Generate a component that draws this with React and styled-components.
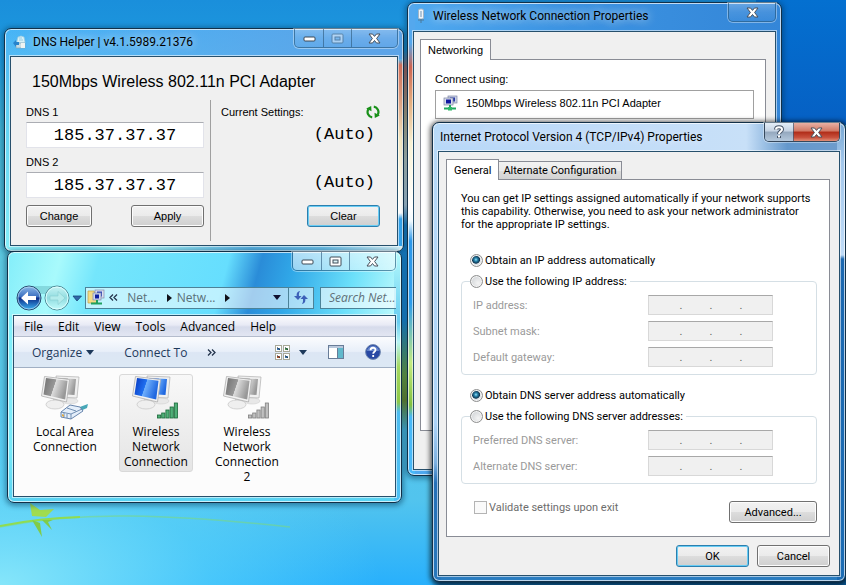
import React from "react";
import styled, { createGlobalStyle, css } from "styled-components";

const segoe = `"Open Sans", "Noto Sans", sans-serif`;
const caption = `Roboto, "Open Sans", sans-serif`;
const dialog = `Roboto, "DejaVu Sans Condensed", sans-serif`;
const msSans = `"Liberation Sans", Arial, sans-serif`;
const mono = `"Liberation Mono", "Courier New", monospace`;

const GlobalStyle = createGlobalStyle`
  *, *::before, *::after { box-sizing: border-box; }
  body { margin: 0; overflow: hidden; }
  button, input { font: inherit; color: inherit; }
`;

/* ---------- desktop ---------- */

const Desktop = styled.main`
  position: relative;
  min-height: 100vh;
  overflow: hidden;
  font: 11px/13px ${dialog};
  color: #000;
  background:
    linear-gradient(90deg, transparent 51%, #1373b6 52%, #0a5c9c 100%) 0 100% / 100% 110px no-repeat,
    linear-gradient(180deg, #c8543c00 50px, #d4705a 70px, #e8c890 120px, #fbf6dc 160px, #eefaff 205px, #1e90e0 225px, #1e90e0 320px, #7db03a 375px, #7a9420 400px, #2b9ae000 430px) 395px 0 / 22px 100% no-repeat,
    radial-gradient(ellipse 380px 190px at 0% 100%, #86e6fa 0%, #5dd6fa99 55%, transparent 100%),
    linear-gradient(180deg, #0470d0 0%, #0660c4 100%) 100% 0 / 90px 125px no-repeat,
    linear-gradient(180deg, #1a8fdb 0, #1e9ade 60px, #43b8d8 130px, #5cc8e0 260px, #52c4ee 500px, #28b0fc 100%);
`;

const Branch = styled.svg`
  position: absolute;
  left: 0;
  bottom: 36px;
  width: 300px;
  height: 48px;
`;

const places = {
  helper: css`
    left: 4px;
    right: calc(50% + 19px);
    top: 28px;
    background:
      linear-gradient(180deg, transparent 30px, #d4705a 36px, #e0a080 70px, #f4e8c0 110px, #fffdf0 160px, #fdfefe 184px, #35a4ec 190px) 100% 0 / 8px 217px no-repeat,
      linear-gradient(90deg, #8aeef8, #7ee6f4 20%, #a6f6f8 34%, #58b0e0 62%, #6cc0e8 80%, #d8f4fa) 0 100% / 100% 6px no-repeat,
      linear-gradient(90deg, transparent, #5ca4e8 90%) 0 0 / 100% 30px no-repeat,
      linear-gradient(180deg, #46b4f6, #54bcf4 30px, #5fd0f2 80px, #86eef8);
  `,
  explorer: css`
    left: 7px;
    right: calc(50% + 21px);
    top: 251px;
    background:
      linear-gradient(180deg, #b4fafc, #68ccf0 70px, #b8f4f4 90px, #a4d860 115px, #8cc848 150px, #4cbcf0 160px, #4cc0f4) 100% 0 / 7px 100% no-repeat,
      linear-gradient(105deg, #84eefa 0, #a8fafc 52px, #74e6fc 90px, #66defe 215px, #2a8cd8 247px, #30a8e8 280px, #6ce0fa 340px, #c4fcfc 100%) 0 0 / 100% 64px no-repeat,
      linear-gradient(180deg, #8cf4fc, #74e8f8 200px, #58d2f2);
  `,
  network: css`
    left: calc(50% - 16px);
    right: 64px;
    top: 2px;
    background:
      linear-gradient(180deg, #54a8ee 40px, #cc6450 64px, #e4b080 100px, #f8f2d4 140px, #ffffff 205px, #f0faff 218px, #2c98ea 238px, #2c9cec 300px, #c4ec80 360px, #80c040 402px, #48b8f8 414px) 0 0 / 7px 100% no-repeat,
      linear-gradient(90deg, #50aaf0, #3c94e2 40%, #3486d8 100%);
  `,
  protocol: css`
    left: calc(50% + 9px);
    right: 0;
    top: 122px;
    background:
      linear-gradient(180deg, #b8daf8 0, #acd4f8 300px, #7cb0e0 340px, #2470b8 360px, #2878bc) 0 0 / 8px 100% no-repeat,
      linear-gradient(180deg, #78a8d4 0, #a4c8ec 40px, #c0dcf8 132px, #1c68b0 136px, #1c6cb4) 100% 0 / 8px 100% no-repeat,
      linear-gradient(90deg, #b8d8f8, #c8e0f8 76%, #6498cc 86%, #6e9ccc) 0 0 / 100% 32px no-repeat,
      #2a7cc0;
  `,
};

const Frame = styled.section`
  position: absolute;
  padding: 0 5px 5px;
  border: 1px solid #123048;
  border-radius: 7px;
  box-shadow: inset 0 0 0 1px #ffffffb0, 0 1px 5px 2px ${(p) => (p.$active ? "#000000a0" : "#00305070")};
  background-clip: padding-box;
  ${(p) => places[p.$place]}
`;

const TitleBar = styled.header`
  display: flex;
  justify-content: space-between;
  align-items: flex-start;
  height: ${(p) => p.$height}px;
`;

const Title = styled.h1`
  display: flex;
  align-items: center;
  gap: 7px;
  margin: ${(p) => (p.$plain ? "6px 0 0 2px" : "5px 0 0 3px")};
  font: 400 12px/16px ${caption};
  white-space: nowrap;
  text-shadow: 0 0 8px #ffffff90, 0 0 12px #ffffff80;
`;

const Caption = styled.div`
  display: flex;
  height: 19px;
  border: 1px solid ${(p) => (p.$strong ? "#35485c" : "#2c5a7ca0")};
  border-top: 0;
  border-radius: 0 0 5px 5px;
  box-shadow: 0 0 0 1px #ffffff60;
  overflow: hidden;
`;

const tones = {
  glass: "linear-gradient(180deg, #ffffff40, #ffffff18 50%, #ffffff08)",
  clear: "linear-gradient(180deg, #ffffffa0, #ffffff80)",
  help: "linear-gradient(180deg, #e4eef8, #c4d2e2 45%, #94a8be 50%, #b4c8dc)",
  close: "linear-gradient(180deg, #e8b0a4, #d07864 45%, #b02c18 50%, #c8503c 80%, #e09078)",
};

const CaptionButton = styled.button`
  display: grid;
  place-items: center;
  width: ${(p) => (p.$wide ? 46 : 28)}px;
  padding: 0;
  border: 0;
  background: ${(p) => tones[p.$tone || "glass"]};
  & + & { border-left: 1px solid #2c5a7ca0; }
`;

const Client = styled.div`
  border: 1px solid #27506c;
  box-shadow: 0 0 0 1px #ffffff90;
  background: #f0f0f0;
`;

const PushButton = styled.button`
  min-width: ${(p) => p.$width || 73}px;
  height: 22px;
  padding: 0 4px;
  border: 1px solid ${(p) => (p.$primary ? "#2c7fae" : "#707070")};
  border-radius: 3px;
  box-shadow: inset 0 0 0 1px ${(p) => (p.$primary ? "#68ccf4" : "#fcfcfc")};
  background: linear-gradient(180deg, #f2f2f2, #ebebeb 48%, #dddddd 50%, #cfcfcf);
`;

/* ---------- DNS helper ---------- */

const HelperBody = styled(Client)`
  padding: 14px 16px 4px 15px;
  font-family: ${msSans};
`;

const AdapterName = styled.h2`
  margin: 0 0 7px 6px;
  font: 400 16px/22px ${msSans};
  white-space: nowrap;
`;

const HelperColumns = styled.div`
  display: grid;
  grid-template-columns: 185px 1fr;
`;

const ServerForm = styled.form`
  padding: 5px 6px 14px 0;
  border-right: 1px solid #a0a0a0;
`;

const FieldLabel = styled.label`
  display: block;
  height: 17px;
  line-height: 14px;
`;

const ServerInput = styled.input`
  display: block;
  width: 100%;
  height: 26px;
  margin-bottom: 7px;
  padding: 0;
  border: 1px solid #e2e3ea;
  border-top-color: #abadb3;
  background: #fff;
  font: 17px/22px ${mono};
  text-align: center;
`;

const ButtonRow = styled.div`
  display: flex;
  justify-content: space-between;
`;

const CurrentSettings = styled.div`
  display: flex;
  flex-direction: column;
  align-items: flex-end;
  padding: 5px 1px 0 10px;
`;

const SettingsHead = styled.div`
  display: flex;
  justify-content: space-between;
  align-items: center;
  width: 100%;
  height: 14px;
`;

const IconButton = styled.button`
  display: grid;
  place-items: center;
  width: ${(p) => p.$size || 14}px;
  height: ${(p) => p.$size || 14}px;
  padding: 0;
  border: 0;
  background: none;
`;

const AutoValue = styled.output`
  height: 20px;
  margin: ${(p) => (p.$second ? "28px 5px 12px" : "6px 5px 0")};
  font: 17px/20px ${mono};
`;

/* ---------- explorer ---------- */

const NavRow = styled.nav`
  display: flex;
  align-items: center;
  height: 35px;
  padding-left: 3px;
  overflow: hidden;
  font: 12px/16px ${segoe};
`;

const Address = styled.div`
  display: flex;
  align-items: center;
  flex: 1;
  height: 22px;
  margin-right: 6px;
  border: 1px solid #4c8298;
  background: #ffffff90;
  color: #5a7078;
`;

const Crumb = styled.a`
  color: inherit;
  text-decoration: none;
  margin: 0 10px 0 ${(p) => (p.$first ? 9 : 5)}px;
`;

const RefreshButton = styled.button`
  display: grid;
  place-items: center;
  width: 25px;
  height: 20px;
  padding: 0;
  border: 0;
  border-left: 1px solid #4c8298;
  background: none;
`;

const DropArrow = styled.svg`
  width: 8px;
  height: 5px;
  margin: ${(p) => p.$margin || "0 7px 0 auto"};
  fill: ${(p) => p.$fill || "#101030"};
`;

const Search = styled.input`
  width: 76px;
  height: 22px;
  padding: 0 0 0 8px;
  border: 1px solid #4c8298;
  border-right: 0;
  background: #ffffffa0;
  font-style: italic;
  &::placeholder { color: #607078; opacity: 1; }
`;

const ExplorerBody = styled(Client)`
  background: #fcfcfc;
  font: 12px/15px ${segoe};
`;

const MenuBar = styled.div`
  display: flex;
  gap: 15px;
  height: 21px;
  padding: 0 10px;
  border-bottom: 1px solid #b4bccc;
  background: linear-gradient(180deg, #fbfbfd, #e8eaf5 45%, #d6dbeb 55%, #e2e6f2);
`;

const MenuItem = styled.button`
  padding: 0;
  border: 0;
  background: none;
`;

const ToolBar = styled.div`
  display: flex;
  align-items: center;
  height: 31px;
  padding: 0 14px 0 18px;
  border-bottom: 1px solid #a0afc3;
  background: linear-gradient(180deg, #fbfcfe, #e8eff9 48%, #dce6f4 52%, #dce8f4);
  color: #1e395b;
`;

const ToolItem = styled.button`
  display: flex;
  align-items: center;
  gap: 4px;
  margin-right: ${(p) => p.$after || 0}px;
  padding: 0;
  border: 0;
  background: none;
`;

const ToolRight = styled.div`
  display: flex;
  align-items: center;
  gap: 21px;
  margin-left: auto;
`;

const Files = styled.ul`
  display: flex;
  align-items: flex-start;
  gap: 17px;
  margin: 0;
  padding: 6px 14px 9px;
  list-style: none;
`;

const FileItem = styled.li`
  display: flex;
  flex-direction: column;
  align-items: center;
  width: 74px;
  padding: 0 3px 2px;
  border: 1px solid ${(p) => (p.$selected ? "#d9d9d9" : "transparent")};
  border-radius: 3px;
  background: ${(p) => (p.$selected ? "linear-gradient(180deg, #f8f8f8, #e5e5e5)" : "none")};
  text-align: center;
`;

/* ---------- property sheets ---------- */

const Sheet = styled(Client)`
  padding: ${(p) => p.$padding};
`;

const Tabs = styled.div`
  display: flex;
  align-items: flex-end;
`;

const Tab = styled.button`
  position: relative;
  height: ${(p) => (p.$on ? 21 : 18)}px;
  margin-bottom: ${(p) => (p.$on ? -1 : 0)}px;
  padding: 0 ${(p) => p.$pad}px;
  border: 1px solid #898c95;
  border-left-width: ${(p) => (p.$on ? 1 : 0)}px;
  border-bottom: 0;
  background: ${(p) => (p.$on ? "#fff" : "linear-gradient(180deg, #f2f2f2, #ebebeb 50%, #dddddd 52%, #d2d2d2)")};
  font-family: ${(p) => p.$font || dialog};
`;

const Page = styled.div`
  min-height: ${(p) => p.$min || 0}px;
  padding: ${(p) => p.$padding};
  border: 1px solid #898c95;
  background: #fff;
`;

const ConnectLabel = styled.p`
  margin: 0 0 4px;
  font: 11px/14px ${msSans};
`;

const AdapterBox = styled.div`
  display: flex;
  align-items: center;
  gap: 8px;
  height: 29px;
  padding: 0 6px 3px;
  border: 1px solid #a0a0a0;
  font: 11px/14px ${msSans};
`;

const Intro = styled.p`
  margin: 0 0 22px;
`;

const Choice = styled.label`
  display: flex;
  align-items: center;
  gap: 2px;
  height: 14px;
  white-space: nowrap;
  margin-left: ${(p) => (p.$inset ? 9 : 0)}px;
`;

const Radio = styled.input`
  appearance: none;
  width: 13px;
  height: 13px;
  margin: 0;
  border: 1px solid #8e8f8f;
  border-radius: 50%;
  box-shadow: inset 0 0 0 1px #f4f4f4;
  background: radial-gradient(circle at 65% 65%, #f4f4f4, #c8ccd0);
  &:checked {
    background: radial-gradient(circle at 45% 42%, #a0e4f8 0, #2a88b0 18%, #0e3450 42%, #dfe4e8 50%, #c8ccd0);
  }
`;

const Group = styled.fieldset`
  min-width: 0;
  margin: ${(p) => p.$margin};
  padding: 7px 43px 7px 11px;
  border: 1px solid #d5dfe5;
  border-radius: 4px;
`;

const Legend = styled.legend`
  margin-left: -3px;
  padding: 0 3px 0 0;
`;

const AddressRow = styled.div`
  display: flex;
  align-items: center;
  justify-content: space-between;
  height: 20px;
  color: #9a9a9a;
  & + & { margin-top: 6px; }
`;

const IpBox = styled.div`
  display: flex;
  width: 125px;
  height: 20px;
  padding-left: 4px;
  border: 1px solid #d8d8d8;
  border-top-color: #a8a8a8;
  background: #f0f0f0;
  color: #606060;
  line-height: 20px;
`;

const Octet = styled.input`
  width: 26px;
  padding: 0;
  border: 0;
  background: none;
  text-align: center;
`;

const Dot = styled.span`
  width: 4px;
  text-align: center;
`;

const SheetFoot = styled.div`
  display: flex;
  align-items: flex-start;
  justify-content: space-between;
`;

const Check = styled.input`
  appearance: none;
  width: 13px;
  height: 13px;
  margin: 0;
  border: 1px solid #b4b4b4;
  background: #fafafa;
`;

const CheckLabel = styled.label`
  display: flex;
  align-items: center;
  gap: 2px;
  margin-left: 13px;
  color: #6d6d6d;
`;

const DialogButtons = styled.div`
  display: flex;
  justify-content: flex-end;
  gap: 8px;
  margin-top: 8px;
`;

/* ---------- icons ---------- */

const MinIcon = () => (
  <svg width="13" height="10" viewBox="0 0 13 10">
    <rect x="1" y="4" width="11" height="4" rx="1" fill="#fff" stroke="#3c4854" />
  </svg>
);

const MaxIcon = ({ dim }) => (
  <svg width="13" height="11" viewBox="0 0 13 11" opacity={dim ? 0.45 : 1}>
    <rect x="1" y="1" width="11" height="9" rx="1" fill="#fff" stroke="#3f4c58" />
    <rect x="4" y="4" width="5" height="3" fill={dim ? "#8cc4f0" : "#e0f6fa"} stroke="#3f4c58" />
  </svg>
);

const CloseIcon = () => (
  <svg width="13" height="11" viewBox="0 0 13 11">
    <path d="M1 1h3.500l2 2.400 2-2.400H12L8.600 5.500 12 10H8.500l-2-2.500-2 2.500H1l3.400-4.500z" fill="#fff" stroke="#48505c" />
  </svg>
);

const HelpGlyph = () => (
  <svg width="12" height="14" viewBox="0 0 12 14" fill="none">
    <path d="M3 4.500C3 1.500 9 1.500 9 4.500 9 6.500 6 6.500 6 9M6 11v2" stroke="#465468" strokeWidth="4" />
    <path d="M3 4.500C3 1.500 9 1.500 9 4.500 9 6.500 6 6.500 6 9M6 10.500v2" stroke="#fff" strokeWidth="2" />
  </svg>
);

const AppIcon = () => (
  <svg width="13" height="14" viewBox="0 0 13 14">
    <path d="M4 6l1-4 3-1 3 1 1 5v1H4z" fill="#d8f2f8" stroke="#9cc8dc" strokeWidth=".7" />
    <path d="M3 8h9v5H3z" fill="#c8dce4" stroke="#80a8bc" strokeWidth=".7" />
    <path d="M8 8h4v5H8z" fill="#eef4f2" />
    <path d="M0 8l3-3v2h3v3H3v2z" fill="#2884cc" />
    <path d="M6 3h3M6 5h4" stroke="#98cce4" />
  </svg>
);

const PlugIcon = () => (
  <svg width="10" height="16" viewBox="0 0 10 16">
    <rect x="2.500" y="1" width="5" height="10" rx="1.500" fill="#eef4fa" stroke="#a4b4c4" />
    <path d="M5 3v6" stroke="#98b4cc" strokeWidth="1.500" />
    <path d="M2 12h6M5 11v4" stroke="#4c7898" />
  </svg>
);

const SyncIcon = () => (
  <svg width="14" height="14" viewBox="0 0 14 14">
    <g fill="none" stroke="#189018" strokeWidth="2.200">
      <path d="M7.800 1.600A5.400 5.400 0 0 1 11.600 9.800" />
      <path d="M6.200 12.400A5.400 5.400 0 0 1 2.400 4.200" />
    </g>
    <path d="M8.500 7.800l.3 5.200 5-2.400zM5.500 6.200L5.200 1 .2 3.400z" fill="#189018" />
  </svg>
);

const NavButtons = () => (
  <svg width="69" height="28" viewBox="0 0 69 28">
    <defs>
      <linearGradient id="navBlue" x2="0" y2="1">
        <stop offset="0" stopColor="#8cb8e8" />
        <stop offset=".45" stopColor="#3c70c0" />
        <stop offset=".5" stopColor="#0c2c88" />
        <stop offset="1" stopColor="#3cb4f4" />
      </linearGradient>
      <linearGradient id="navPale" x2="0" y2="1">
        <stop offset="0" stopColor="#c8f4f4" />
        <stop offset=".5" stopColor="#90dce0" />
        <stop offset="1" stopColor="#c4fcfc" />
      </linearGradient>
    </defs>
    <path d="M13 2h30v8H13z" fill="#70c4cc" opacity=".6" />
    <circle cx="13" cy="14" r="12" fill="url(#navBlue)" stroke="#284c70" />
    <circle cx="13" cy="14" r="11" fill="none" stroke="#b8dcf4" opacity=".7" />
    <path d="M5 14l7-6.500v4.500h8v4h-8v4.500z" fill="#fff" />
    <circle cx="41" cy="14" r="12" fill="url(#navPale)" stroke="#508c98" />
    <circle cx="41" cy="14" r="11" fill="none" stroke="#dcffff" />
    <path d="M49 14l-7-6.500v4.500h-8v4h8v4.500z" fill="#b4ecec" stroke="#88ccd0" strokeWidth=".6" />
    <path d="M57 12h8.500L61 17z" fill="#3068a8" stroke="#184878" strokeWidth=".8" />
  </svg>
);

const NetIcon = () => (
  <svg width="16" height="16" viewBox="0 0 16 16">
    <rect x="6" y="1" width="9" height="7" fill="#c8d0e4" stroke="#8088a8" strokeWidth=".7" />
    <path d="M8 2.500h5v4H8z" fill="#2838a8" />
    <rect x="2" y="3" width="9" height="7" fill="#d8dcec" stroke="#7c84a0" strokeWidth=".7" />
    <path d="M4 4.500h5v4H4z" fill="#1018a0" />
    <path d="M8 10v3M2 13.500h12" stroke="#20a860" strokeWidth="2" />
    <path d="M6 12h4v3.500H6z" fill="#30b868" />
  </svg>
);

const NetFolder = () => (
  <svg width="18" height="17" viewBox="0 0 18 17">
    <path d="M1 2h6l1 2h2v10H1z" fill="#f4dc84" stroke="#c0a048" strokeWidth=".7" />
    <rect x="8" y="1" width="9" height="8" fill="#dce0f0" stroke="#808cac" strokeWidth=".7" />
    <path d="M10 2.500h5v5h-5z" fill="#3048b8" />
    <rect x="6" y="4" width="8" height="7" fill="#d0d8ec" stroke="#808cac" strokeWidth=".7" />
    <path d="M8 5.500h4v4H8z" fill="#1020a0" />
    <path d="M10 11v3M4 14.500h11" stroke="#20a060" strokeWidth="2" />
  </svg>
);

const Arrow = (props) => (
  <DropArrow viewBox="0 0 8 5" $margin={props.margin} $fill={props.fill}>
    <path d="M0 0h8L4 5z" />
  </DropArrow>
);

const RightArrow = () => (
  <svg width="5" height="8" viewBox="0 0 5 8"><path d="M0 0l5 4-5 4z" fill="#101018" /></svg>
);

const Chevrons = ({ back }) => (
  <svg width="9" height="7" viewBox="0 0 9 7" fill="none" stroke="#24344c" strokeWidth="1.300">
    {back ? <path d="M4 .5l-3 3 3 3M8 .5l-3 3 3 3" /> : <path d="M1 .5l3 3-3 3M5 .5l3 3-3 3" />}
  </svg>
);

const RefreshIcon = () => (
  <svg width="14" height="13" viewBox="0 0 14 13" fill="#3c60b8">
    <path d="M6 0C3 .5 2.500 2.500 2.700 5H0l4 4 3.500-4H5C4.800 3 5 1.500 6 0z" />
    <path d="M8 13c3-.5 3.500-2.500 3.300-5H14l-4-4-3.500 4H9c.2 2 0 3.500-1 5z" />
  </svg>
);

const ViewIcon = () => (
  <svg width="15" height="15" viewBox="0 0 15 15">
    {[[0, 0, "#4080c0"], [8, 0, "#50a050"], [0, 8, "#c05020"], [8, 8, "#3878b0"]].map(([x, y, c]) => (
      <g key={`${x}-${y}`}>
        <rect x={x + 0.5} y={y + 0.5} width="6" height="6" fill="#fff" stroke="#a8a898" />
        <path d={`M${x + 2} ${y + 3}h3v2h-3z`} fill={c} />
        <path d={`M${x + 2} ${y + 2.5}l3 2.500`} stroke="#283848" />
      </g>
    ))}
  </svg>
);

const PaneIcon = () => (
  <svg width="16" height="14" viewBox="0 0 16 14">
    <rect x=".5" y=".5" width="15" height="13" fill="#fff" stroke="#687c98" />
    <path d="M1 1h14v2H1z" fill="#b8c8dc" />
    <path d="M10 3h5v10h-5z" fill="#60b8cc" />
    <path d="M9.500 3v10" stroke="#687c98" />
  </svg>
);

const HelpIcon = () => (
  <svg width="16" height="16" viewBox="0 0 16 16">
    <circle cx="8" cy="8" r="7.400" fill="#2848a4" stroke="#7088b0" />
    <path d="M2 7a6 5 0 0 1 12 0z" fill="#7c9cdc" opacity=".7" />
    <path d="M5.500 6.300c0-3.400 5-3.300 5-.3 0 1.900-2.300 1.700-2.300 3.800M8.200 11v2" fill="none" stroke="#fff" strokeWidth="1.800" />
  </svg>
);

const Signal = ({ fill, stroke }) => (
  <g fill={fill} stroke={stroke} strokeWidth=".8">
    {[3, 5, 8, 11, 15].map((h, i) => (
      <rect key={h} x={25.5 + i * 4.2} y={43 - h} width="3.200" height={h} />
    ))}
  </g>
);

const Computers = ({ id, on, cable }) => (
  <svg width="48" height="49" viewBox="0 0 48 49">
    <defs>
      <linearGradient id={`${id}a`} x2="1" y2="0.300">
        <stop offset="0" stopColor={on ? "#0838c0" : "#707070"} />
        <stop offset=".5" stopColor={on ? "#2070f0" : "#989898"} />
        <stop offset=".52" stopColor={on ? "#70b0fc" : "#dcdcdc"} />
        <stop offset="1" stopColor={on ? "#2068e0" : "#989898"} />
      </linearGradient>
    </defs>
    <ellipse cx="29" cy="26" rx="8" ry="3" fill="#e8e8e8" stroke="#d0d0d0" strokeWidth=".6" />
    <path d="M15 1l23 1-2 21-19-1z" fill="#f0f0f0" stroke="#b8b8b8" strokeWidth=".8" />
    <path d="M17 3l18 1-1.500 16-16-1z" fill={`url(#${id}a)`} />
    <path d="M12 23l8 1 1 5h-9z" fill="#d0d0d0" />
    <ellipse cx="14" cy="29.500" rx="9" ry="4.500" fill="#efefef" stroke="#c4c4c4" strokeWidth=".7" />
    <path d="M3.500 1.500l25 3-3 22.500L.5 21z" fill="#f2f2f2" stroke="#b0b0b0" strokeWidth=".8" />
    <path d="M5 3l21.500 2.700-2.300 18.800L2.500 19.500z" fill={`url(#${id}a)`} />
    {cable ? (
      <g>
        <path d="M36 33l11-4-1 4-9 4z" fill="#48a8b8" />
        <path d="M20 37l9-7 10 2 3 4-12 8-10-2z" fill="#e4eefa" stroke="#5878a4" strokeWidth=".9" />
        <path d="M20 37l10 2v5M30 39l11-5M26 33l9 3M23 38v4M26 39v4" fill="none" stroke="#6484ac" strokeWidth=".9" />
        <path d="M21 39l2 1v2l-2-1z" fill="#e0a840" />
      </g>
    ) : (
      <Signal fill={on ? "#50b078" : "#c0c0c0"} stroke={on ? "#186838" : "#808080"} />
    )}
  </svg>
);

/* ---------- pieces ---------- */

const IpField = ({ label }) => (
  <AddressRow>
    <span>{label}</span>
    <IpBox role="group" aria-label={label}>
      {[1, 2, 3, 4].map((n) => (
        <React.Fragment key={n}>
          {n > 1 && <Dot>.</Dot>}
          <Octet disabled aria-label={`${label} ${n}`} />
        </React.Fragment>
      ))}
    </IpBox>
  </AddressRow>
);

const AddressGroup = ({ name, choice, fields, margin }) => (
  <Group $margin={margin}>
    <Legend>
      <Choice><Radio type="radio" name={name} />{choice}</Choice>
    </Legend>
    {fields.map((f) => <IpField key={f} label={f} />)}
  </Group>
);

const HelperWindow = () => (
  <Frame $place="helper">
    <TitleBar $height={27}>
      <Title><AppIcon />DNS Helper | v4.1.5989.21376</Title>
      <Caption>
        <CaptionButton aria-label="Minimize"><MinIcon /></CaptionButton>
        <CaptionButton aria-label="Maximize" disabled><MaxIcon dim /></CaptionButton>
        <CaptionButton aria-label="Close" $wide><CloseIcon /></CaptionButton>
      </Caption>
    </TitleBar>
    <HelperBody>
      <AdapterName>150Mbps Wireless 802.11n PCI Adapter</AdapterName>
      <HelperColumns>
        <ServerForm onSubmit={(e) => e.preventDefault()}>
          <FieldLabel htmlFor="dns1">DNS 1</FieldLabel>
          <ServerInput id="dns1" defaultValue="185.37.37.37" />
          <FieldLabel htmlFor="dns2">DNS 2</FieldLabel>
          <ServerInput id="dns2" defaultValue="185.37.37.37" />
          <ButtonRow>
            <PushButton type="button" $width={66}>Change</PushButton>
            <PushButton>Apply</PushButton>
          </ButtonRow>
        </ServerForm>
        <CurrentSettings>
          <SettingsHead>
            Current Settings:
            <IconButton aria-label="Refresh settings"><SyncIcon /></IconButton>
          </SettingsHead>
          <AutoValue>(Auto)</AutoValue>
          <AutoValue $second>(Auto)</AutoValue>
          <PushButton $primary>Clear</PushButton>
        </CurrentSettings>
      </HelperColumns>
    </HelperBody>
  </Frame>
);

const connections = [
  { id: "lan", name: "Local Area Connection", cable: true },
  { id: "wlan", name: "Wireless Network Connection", on: true },
  { id: "wlan2", name: "Wireless Network Connection 2" },
];

const ExplorerWindow = () => (
  <Frame $place="explorer">
    <TitleBar $height={28}>
      <span />
      <Caption>
        <CaptionButton aria-label="Minimize" $tone="clear"><MinIcon /></CaptionButton>
        <CaptionButton aria-label="Maximize" $tone="clear"><MaxIcon /></CaptionButton>
        <CaptionButton aria-label="Close" $tone="clear" $wide><CloseIcon /></CaptionButton>
      </Caption>
    </TitleBar>
    <NavRow>
      <NavButtons />
      <Address>
        <IconButton aria-label="Network Connections" $size={20}><NetFolder /></IconButton>
        &nbsp;<Chevrons back />
        <Crumb href="#network" $first>Net...</Crumb><RightArrow />
        <Crumb href="#connections">Netw...</Crumb><RightArrow />
        <Arrow />
        <RefreshButton aria-label="Refresh"><RefreshIcon /></RefreshButton>
      </Address>
      <Search aria-label="Search" placeholder="Search Net..." />
    </NavRow>
    <ExplorerBody>
      <MenuBar>
        {["File", "Edit", "View", "Tools", "Advanced", "Help"].map((m) => <MenuItem key={m}>{m}</MenuItem>)}
      </MenuBar>
      <ToolBar>
        <ToolItem $after={30}>Organize <Arrow margin="0" fill="#1e395b" /></ToolItem>
        <ToolItem $after={20}>Connect To</ToolItem>
        <ToolItem aria-label="More commands"><Chevrons /></ToolItem>
        <ToolRight>
          <ToolItem aria-label="Change view"><ViewIcon /><Arrow margin="0 0 0 5px" fill="#1e395b" /></ToolItem>
          <ToolItem aria-label="Preview pane"><PaneIcon /></ToolItem>
          <ToolItem aria-label="Help"><HelpIcon /></ToolItem>
        </ToolRight>
      </ToolBar>
      <Files>
        {connections.map((c) => (
          <FileItem key={c.id} $selected={c.on}>
            <Computers id={c.id} on={c.on} cable={c.cable} />
            {c.name}
          </FileItem>
        ))}
      </Files>
    </ExplorerBody>
  </Frame>
);

const NetworkWindow = () => (
  <Frame $place="network">
    <TitleBar $height={28}>
      <Title><PlugIcon />Wireless Network Connection Properties</Title>
      <Caption>
        <CaptionButton aria-label="Close" $wide><CloseIcon /></CaptionButton>
      </Caption>
    </TitleBar>
    <Sheet $padding="7px 9px 38px 6px">
      <Tabs><Tab $on $pad={7} $font={msSans}>Networking</Tab></Tabs>
      <Page $min={372} $padding="12px 11px 0 14px">
        <ConnectLabel>Connect using:</ConnectLabel>
        <AdapterBox><NetIcon />150Mbps Wireless 802.11n PCI Adapter</AdapterBox>
      </Page>
    </Sheet>
  </Frame>
);

const ProtocolWindow = () => (
  <Frame $place="protocol" $active>
    <TitleBar $height={28}>
      <Title $plain>Internet Protocol Version 4 (TCP/IPv4) Properties</Title>
      <Caption $strong>
        <CaptionButton aria-label="Help" $tone="help"><HelpGlyph /></CaptionButton>
        <CaptionButton aria-label="Close" $tone="close" $wide><CloseIcon /></CaptionButton>
      </Caption>
    </TitleBar>
    <Sheet $padding="7px 9px 8px 7px">
      <Tabs>
        <Tab $on $pad={7}>General</Tab>
        <Tab $pad={4}>Alternate Configuration</Tab>
      </Tabs>
      <Page $padding="12px 12px 13px 14px">
        <Intro>
          You can get IP settings assigned automatically if your network supports<br />
          this capability. Otherwise, you need to ask your network administrator<br />
          for the appropriate IP settings.
        </Intro>
        <Choice $inset><Radio type="radio" name="ip-mode" defaultChecked />Obtain an IP address automatically</Choice>
        <AddressGroup
          name="ip-mode"
          margin="7px 0 13px"
          choice="Use the following IP address:"
          fields={["IP address:", "Subnet mask:", "Default gateway:"]}
        />
        <Choice $inset><Radio type="radio" name="dns-mode" defaultChecked />Obtain DNS server address automatically</Choice>
        <AddressGroup
          name="dns-mode"
          margin="7px 0 17px"
          choice="Use the following DNS server addresses:"
          fields={["Preferred DNS server:", "Alternate DNS server:"]}
        />
        <SheetFoot>
          <CheckLabel><Check type="checkbox" disabled />Validate settings upon exit</CheckLabel>
          <PushButton $width={88}>Advanced...</PushButton>
        </SheetFoot>
      </Page>
      <DialogButtons>
        <PushButton $primary>OK</PushButton>
        <PushButton>Cancel</PushButton>
      </DialogButtons>
    </Sheet>
  </Frame>
);

export default function App() {
  return (
    <>
      <GlobalStyle />
      <Desktop>
        <Branch viewBox="0 0 300 48">
          <path d="M0 26Q60 14 130 15T290 26" fill="none" stroke="#80dc70" strokeWidth="1.500" opacity=".5" />
          <path d="M0 25Q40 17 80 16" fill="none" stroke="#90dc50" strokeWidth="2" />
          <path d="M30 2l10 7 14-1-8 8-14-1z" fill="#a0dc50" />
          <path d="M32 19l10 17-2-14zM42 19l10 10-4-8 5-2z" fill="#80cc48" />
        </Branch>
        <HelperWindow />
        <NetworkWindow />
        <ExplorerWindow />
        <ProtocolWindow />
      </Desktop>
    </>
  );
}
